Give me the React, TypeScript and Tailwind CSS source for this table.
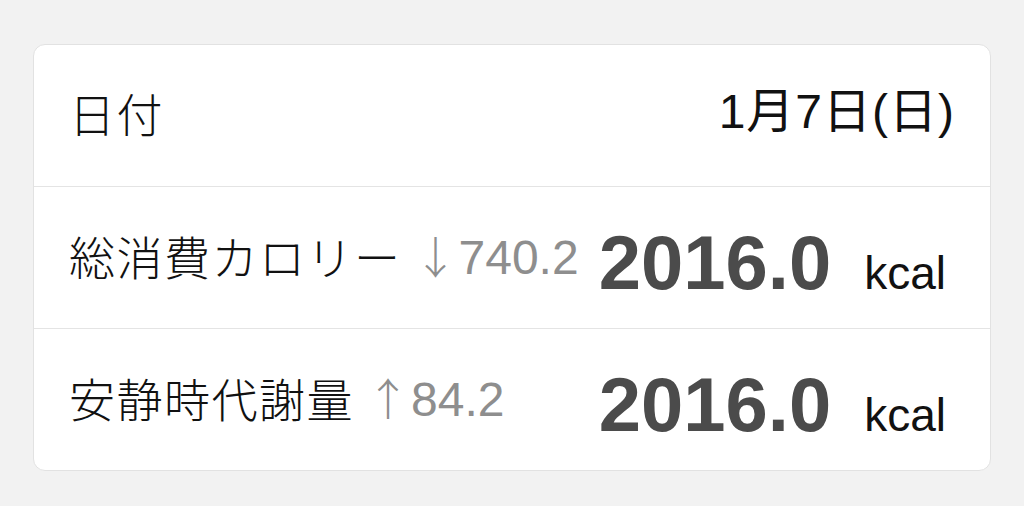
import React from 'react';

const jp = '"Noto Sans CJK JP", sans-serif';
const latin = '"Liberation Sans", "Noto Sans CJK JP", sans-serif';

interface EnergyRowProps {
  label: string;
  arrow: string;
  delta: string;
  value: string;
}

const EnergyRow: React.FC<EnergyRowProps> = ({ label, arrow, delta, value }) => (
  <div className="flex h-[141px] items-center justify-between pl-[35px] pr-[44px]">
    <div className="mb-[6px] flex items-center">
      <span className="text-[46px] font-light leading-none tracking-[1.5px] text-[#111]" style={{ fontFamily: jp }}>
        {label}
      </span>
      <span className="ml-[12px] text-[44px] font-light leading-none text-[#8e8e8e]" style={{ fontFamily: jp }}>
        {arrow}
      </span>
      <span className="ml-[1px] mt-[6px] text-[48px] leading-none text-[#8e8e8e]" style={{ fontFamily: latin }}>
        {delta}
      </span>
    </div>
    <div className="flex items-baseline pt-[10px]">
      <span className="text-[76px] font-bold leading-none text-[#4b4b4b]" style={{ fontFamily: latin }}>
        {value}
      </span>
      <span className="ml-[33px] text-[46px] leading-none text-[#111]" style={{ fontFamily: latin }}>
        kcal
      </span>
    </div>
  </div>
);

export default function App() {
  return (
    <div className="h-[506px] w-[1024px] bg-[#f2f2f2] pt-[44px] px-[33px]">
      <div className="overflow-hidden rounded-[12px] border border-[#e2e2e2] bg-white">
        <div className="flex h-[141px] items-center justify-between pb-[8px] pl-[35px] pr-[35px]">
          <span className="text-[46px] font-light leading-none tracking-[1.5px] text-[#111]" style={{ fontFamily: jp }}>
            日付
          </span>
          <span className="text-[48px] leading-none tracking-[1px] text-[#111]" style={{ fontFamily: latin }}>
            1月7日(日)
          </span>
        </div>
        <div className="h-px bg-[#e4e4e4]" />
        <EnergyRow label="総消費カロリー" arrow="↓" delta="740.2" value="2016.0" />
        <div className="h-px bg-[#e4e4e4]" />
        <EnergyRow label="安静時代謝量" arrow="↑" delta="84.2" value="2016.0" />
      </div>
    </div>
  );
}
